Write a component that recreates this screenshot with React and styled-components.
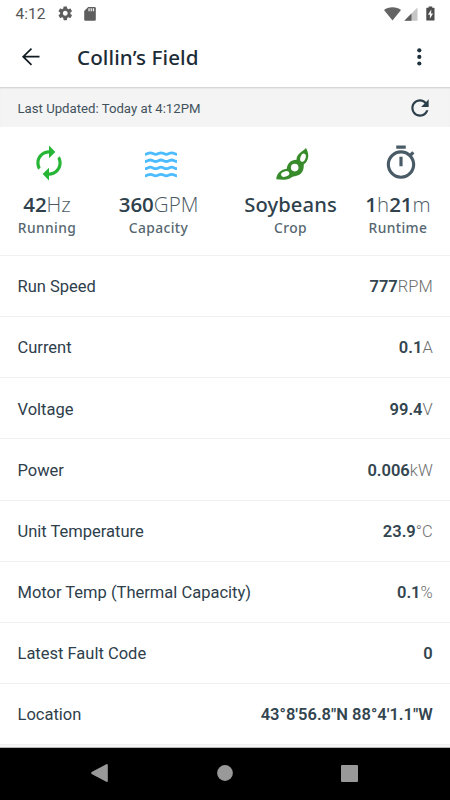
import styled, { createGlobalStyle } from "styled-components";

const GlobalStyle = createGlobalStyle`
  * {
    box-sizing: border-box;
  }

  body {
    margin: 0;
    background: #fff;
    font-family: Roboto, sans-serif;
    color: #2e404b;
  }

  svg {
    display: block;
  }
`;

const Screen = styled.div`
  display: flex;
  flex-direction: column;
  width: 450px;
  height: 800px;
  overflow: hidden;
  background: #fff;
`;

const StatusBar = styled.div`
  display: flex;
  align-items: center;
  flex: none;
  height: 28px;
  padding: 0 15.5px 1px 15.5px;
`;

const Clock = styled.span`
  width: 41.5px;
  font-size: 15.5px;
  line-height: 20px;
  color: #555;
`;

const StatusIcons = styled.div`
  display: flex;
  align-items: center;
  gap: ${(props) => props.$gap}px;
  margin-left: ${(props) => (props.$end ? "auto" : 0)};
`;

const AppBar = styled.header`
  display: flex;
  align-items: center;
  flex: none;
  height: 59px;
  padding: 0 19px 1px;
`;

const Title = styled.h1`
  flex: 1;
  margin: 0 0 0 34px;
  font-family: "Noto Sans", sans-serif;
  font-size: 20.6px;
  font-weight: 500;
  line-height: 28px;
  letter-spacing: 0.1px;
  color: #1c2c37;
`;

const UpdateBar = styled.div`
  display: flex;
  align-items: center;
  justify-content: space-between;
  flex: none;
  height: 40px;
  padding: 2px 17.5px 0;
  background: #f4f4f4;
  box-shadow: inset 0 2px 2px -1px rgba(0, 0, 0, 0.16);
  font-size: 13.2px;
  color: #42525c;
`;

const Stats = styled.section`
  display: grid;
  grid-template-columns: 94px 129px 135px 80px;
  flex: none;
  height: 128.75px;
  padding-top: 16.5px;
  border-bottom: 1px solid #f0f0f0;
`;

const Stat = styled.div`
  display: flex;
  flex-direction: column;
  align-items: center;
  font-family: "Open Sans", sans-serif;
  white-space: nowrap;

  svg {
    margin-left: ${(props) => props.$shift ?? 5}px;
  }
`;

const StatValue = styled.div`
  margin-top: 8px;
  font-size: 20.5px;
  font-weight: 600;
  line-height: 28px;
  color: #2e414c;
`;

const CropName = styled(StatValue)`
  font-family: "Noto Sans", sans-serif;
  font-size: 20.2px;
  font-weight: 500;
  letter-spacing: 0.1px;
`;

const StatUnit = styled.span`
  font-weight: 300;
  color: #4b5a62;
`;

const StatLabel = styled.div`
  font-family: "Noto Sans", sans-serif;
  font-size: 13.8px;
  font-weight: 500;
  line-height: 19px;
  letter-spacing: 0.4px;
  color: #566771;
`;

const Readings = styled.ul`
  flex: 1;
  min-height: 0;
  margin: 0;
  padding: 0;
  overflow: hidden;
  list-style: none;
  background: #f6f6f6;
`;

const Reading = styled.li`
  display: flex;
  align-items: center;
  justify-content: space-between;
  height: 61.2px;
  padding: 1.6px 17.3px 0 17.5px;
  border-bottom: 1px solid #f0f0f0;
  background: #fff;
  font-size: 16.5px;
`;

const ReadingValue = styled.span`
  font-weight: 600;
  color: #33454f;
`;

const ReadingUnit = styled.span`
  font-weight: 300;
  color: #6e6e6e;
`;

const NavBar = styled.nav`
  display: flex;
  align-items: center;
  justify-content: space-between;
  flex: none;
  height: 53px;
  padding: 0 92px 2px 91px;
  border-top: 1px solid #b5b5b5;
  background: #000;
`;

const GearIcon = () => (
  <svg width="16.5" height="16.5" viewBox="0 0 24 24" fill="#5e5e5e">
    <path d="M19.43 12.98c.04-.32.07-.64.07-.98s-.03-.66-.07-.98l2.11-1.65c.19-.15.24-.42.12-.64l-2-3.46c-.12-.22-.39-.3-.61-.22l-2.49 1c-.52-.4-1.08-.73-1.69-.98l-.38-2.65C14.46 2.18 14.25 2 14 2h-4c-.25 0-.46.18-.49.42l-.38 2.65c-.61.25-1.17.59-1.69.98l-2.49-1c-.23-.09-.49 0-.61.22l-2 3.46c-.13.22-.07.49.12.64l2.11 1.65c-.04.32-.07.65-.07.98s.03.66.07.98l-2.11 1.65c-.19.15-.24.42-.12.64l2 3.46c.12.22.39.3.61.22l2.49-1c.52.4 1.08.73 1.69.98l.38 2.65c.03.24.24.42.49.42h4c.25 0 .46-.18.49-.42l.38-2.65c.61-.25 1.17-.59 1.69-.98l2.49 1c.23.09.49 0 .61-.22l2-3.46c.12-.22.07-.49-.12-.64l-2.11-1.65zM12 15.5c-1.93 0-3.5-1.57-3.5-3.5s1.57-3.5 3.5-3.5 3.5 1.57 3.5 3.5-1.57 3.5-3.5 3.5z" />
  </svg>
);

const SdCardIcon = () => (
  <svg width="12" height="14" viewBox="0 0 12 14">
    <path
      d="M4.2 0H10.6Q11.8 0 11.8 1.2V12.6Q11.8 13.8 10.6 13.8H1.4Q.2 13.8.2 12.6V4z"
      fill="#5e5e5e"
    />
    <path
      d="M4.4 1.2h1.3v3H4.4zM6.6 1.2h1.3v3H6.6zM8.8 1.2h1.3v3H8.8z"
      fill="#eee"
    />
  </svg>
);

const WifiIcon = () => (
  <svg width="17" height="14" viewBox="0 0 17 14">
    <path
      d="M8.5 13.4 0 2.9C2.2 1.1 5.1.2 8.5.2s6.3.9 8.5 2.7z"
      fill="#646464"
    />
  </svg>
);

const SignalIcon = () => (
  <svg width="14" height="14" viewBox="0 0 14 14">
    <path d="M13.5.5v13.3H.3z" fill="#c6c6c6" />
    <path d="M7.5 6.5v7.3H.3z" fill="#5e5e5e" />
  </svg>
);

const BatteryIcon = () => (
  <svg width="9" height="15" viewBox="0 0 9 15">
    <path
      d="M2.6.4h3.6v1.3H8q.5 0 .5.5v11.8q0 .6-.6.6H.9q-.6 0-.6-.6V2.2q0-.5.5-.5h1.8z"
      fill="#4d4d4d"
    />
    <path d="M5.3 3.5 1.9 8.8h2v3.9l3.2-5.2h-2z" fill="#f5f5f5" />
  </svg>
);

const BackIcon = () => (
  <svg
    width="24"
    height="24"
    viewBox="0 0 24 24"
    fill="none"
    stroke="#101b22"
    strokeWidth="1.7"
  >
    <path d="M20.5 11.7H4.5M12.5 3.6 4.2 11.7l8.3 8.1" />
  </svg>
);

const MoreIcon = () => (
  <svg width="24" height="24" viewBox="0 0 24 24" fill="#1f323d">
    <circle cx="12.3" cy="5.3" r="2.1" />
    <circle cx="12.3" cy="11.9" r="2.1" />
    <circle cx="12.3" cy="18.5" r="2.1" />
  </svg>
);

const RefreshIcon = () => (
  <svg width="26" height="26" viewBox="0 0 24 24" fill="#2b3f4b">
    <path d="M17.65 6.35C16.2 4.9 14.21 4 12 4c-4.42 0-7.99 3.58-7.99 8s3.57 8 7.99 8c3.73 0 6.84-2.55 7.73-6h-2.08c-.82 2.33-3.04 4-5.65 4-3.31 0-6-2.69-6-6s2.69-6 6-6c1.66 0 3.14.69 4.22 1.78L13 11h7V4l-2.35 2.35z" />
  </svg>
);

const RunningIcon = () => (
  <svg width="38" height="38" viewBox="0 0 24 24" fill="#26b535">
    <path d="M12 6v3l4-4-4-4v3c-4.42 0-8 3.58-8 8 0 1.57.46 3.03 1.24 4.26L6.7 14.8c-.45-.83-.7-1.79-.7-2.8 0-3.31 2.69-6 6-6zm6.76 1.74L17.3 9.2c.44.84.7 1.79.7 2.8 0 3.31-2.69 6-6 6v-3l-4 4 4 4v-3c4.42 0 8-3.58 8-8 0-1.57-.46-3.03-1.24-4.26z" />
  </svg>
);

// one crest of a wave line
const crest = "c2.2 0 3.1-1.5 5.33-1.5s3.1 1.5 5.33 1.5";

const WaterIcon = () => (
  <svg
    width="38"
    height="38"
    viewBox="0 0 38 38"
    fill="none"
    stroke="#4dbcff"
    strokeWidth="2.8"
  >
    {[10.3, 17.5, 24.7, 31.8].map((y) => (
      <path key={y} d={`M3 ${y}${crest}${crest}${crest}`} />
    ))}
  </svg>
);

const SoybeanIcon = () => (
  <svg width="38" height="38" viewBox="0 0 38 38">
    <path
      d="M33 4C35.3 8 36 12 34.6 15.5 33.8 18.2 31.7 19.6 30.7 20.6 31.2 25.5 29 31.5 22 32.2 19.5 32.2 18.6 33.6 16.8 34.4 13 36.2 8 35.8 3.3 35.2 3.3 30.5 7 25.5 13.8 24.7 14.3 19.8 17.5 16 23.5 15.8 23.5 10 28 8.8 33 4z"
      fill="#388b2b"
    />
    <g fill="#fff">
      <ellipse
        cx="30"
        cy="13.7"
        rx="2.6"
        ry="4.2"
        transform="rotate(18 30 13.7)"
      />
      <circle cx="21.7" cy="23.6" r="3.8" />
      <ellipse
        cx="12.2"
        cy="30"
        rx="4.2"
        ry="2.7"
        transform="rotate(-16 12.2 30)"
      />
    </g>
  </svg>
);

const TimerIcon = () => (
  <svg width="38" height="38" viewBox="0 0 24 24" fill="#495b66">
    <path d="M15 1H9v2h6V1zm-4 13h2V8h-2v6zm8.03-6.61l1.42-1.42c-.43-.51-.9-.99-1.41-1.41l-1.42 1.42C16.07 4.74 14.12 4 12 4c-4.97 0-9 4.03-9 9s4.02 9 9 9 9-4.03 9-9c0-2.12-.74-4.07-1.97-5.61zM12 20c-3.87 0-7-3.13-7-7s3.13-7 7-7 7 3.13 7 7-3.13 7-7 7z" />
  </svg>
);

const readings = [
  { label: "Run Speed", value: "777", unit: "RPM" },
  { label: "Current", value: "0.1", unit: "A" },
  { label: "Voltage", value: "99.4", unit: "V" },
  { label: "Power", value: "0.006", unit: "kW" },
  { label: "Unit Temperature", value: "23.9", unit: "°C" },
  { label: "Motor Temp (Thermal Capacity)", value: "0.1", unit: "%" },
  { label: "Latest Fault Code", value: "0" },
  { label: "Location", value: "43°8'56.8\"N 88°4'1.1\"W" },
];

export default function App() {
  return (
    <Screen>
      <GlobalStyle />
      <StatusBar>
        <Clock>4:12</Clock>
        <StatusIcons $gap={10}>
          <GearIcon />
          <SdCardIcon />
        </StatusIcons>
        <StatusIcons $gap={8} $end>
          <StatusIcons $gap={3}>
            <WifiIcon />
            <SignalIcon />
          </StatusIcons>
          <BatteryIcon />
        </StatusIcons>
      </StatusBar>
      <AppBar>
        <BackIcon />
        <Title>Collin’s Field</Title>
        <MoreIcon />
      </AppBar>
      <UpdateBar>
        <span>Last Updated: Today at 4:12PM</span>
        <RefreshIcon />
      </UpdateBar>
      <Stats>
        <Stat $shift={4}>
          <RunningIcon />
          <StatValue>
            42<StatUnit>Hz</StatUnit>
          </StatValue>
          <StatLabel>Running</StatLabel>
        </Stat>
        <Stat>
          <WaterIcon />
          <StatValue>
            360<StatUnit>GPM</StatUnit>
          </StatValue>
          <StatLabel>Capacity</StatLabel>
        </Stat>
        <Stat $shift={3}>
          <SoybeanIcon />
          <CropName>Soybeans</CropName>
          <StatLabel>Crop</StatLabel>
        </Stat>
        <Stat>
          <TimerIcon />
          <StatValue>
            1<StatUnit>h</StatUnit>21<StatUnit>m</StatUnit>
          </StatValue>
          <StatLabel>Runtime</StatLabel>
        </Stat>
      </Stats>
      <Readings>
        {readings.map(({ label, value, unit }) => (
          <Reading key={label}>
            <span>{label}</span>
            <ReadingValue>
              {value}
              {unit && <ReadingUnit>{unit}</ReadingUnit>}
            </ReadingValue>
          </Reading>
        ))}
      </Readings>
      <NavBar>
        <svg width="17" height="18" viewBox="0 0 17 18" fill="#999">
          <path d="M15.8 0q1 0 1 1v16q0 1-1 1L.6 10Q-.2 9 .6 8z" />
        </svg>
        <svg width="16" height="16" viewBox="0 0 16 16" fill="#999">
          <circle cx="8" cy="8" r="7.9" />
        </svg>
        <svg width="17" height="17" viewBox="0 0 17 17" fill="#999">
          <rect width="17" height="17" rx="1" />
        </svg>
      </NavBar>
    </Screen>
  );
}
